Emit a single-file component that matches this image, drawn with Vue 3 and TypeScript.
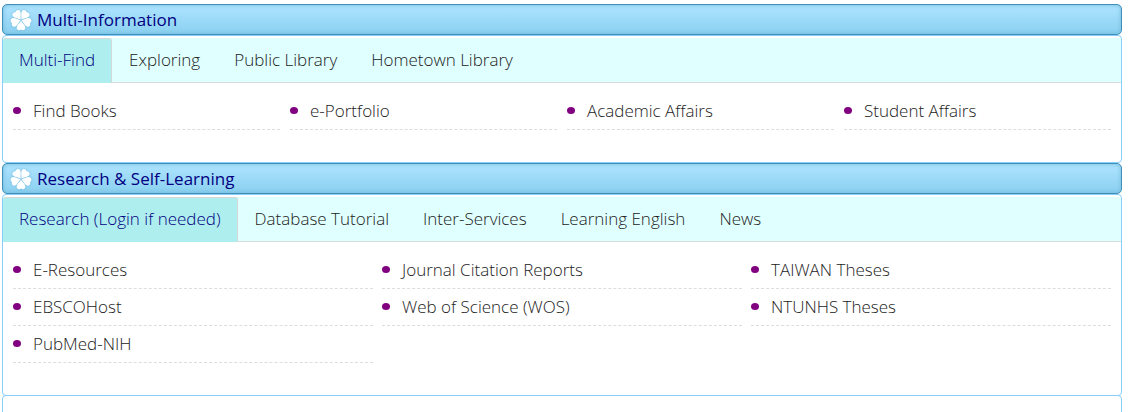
<script setup lang="ts">
import { ref } from 'vue'

interface Section {
  title: string
  columns: number
  tabs: string[]
  links: string[]
}

const sections: Section[] = [
  {
    title: 'Multi-Information',
    columns: 4,
    tabs: ['Multi-Find', 'Exploring', 'Public Library', 'Hometown Library'],
    links: ['Find Books', 'e-Portfolio', 'Academic Affairs', 'Student Affairs'],
  },
  {
    title: 'Research & Self-Learning',
    columns: 3,
    tabs: ['Research (Login if needed)', 'Database Tutorial', 'Inter-Services', 'Learning English', 'News'],
    links: [
      'E-Resources',
      'Journal Citation Reports',
      'TAIWAN Theses',
      'EBSCOHost',
      'Web of Science (WOS)',
      'NTUNHS Theses',
      'PubMed-NIH',
    ],
  },
]

const active = ref<number[]>(sections.map(() => 0))
const petals = [36, 108, 180, 252, 324]
</script>

<template>
  <main class="page">
    <section v-for="(section, s) in sections" :key="section.title">
      <h2 class="title">
        <svg class="flower" viewBox="0 0 24 24" aria-hidden="true">
          <path
            v-for="angle in petals"
            :key="angle"
            :transform="`rotate(${angle} 12 12)`"
            d="M12 11.3 C10.6 9 7.4 6.4 7.2 3.8 C7 .9 10.2 .2 12 1.6 C13.8 .2 17 .9 16.8 3.8 C16.6 6.4 13.4 9 12 11.3Z"
          />
        </svg>
        {{ section.title }}
      </h2>
      <div class="panel">
        <nav class="tabs" role="tablist">
          <button
            v-for="(tab, t) in section.tabs"
            :key="tab"
            type="button"
            role="tab"
            class="tab"
            :class="{ active: active[s] === t }"
            :aria-selected="active[s] === t"
            @click="active[s] = t"
          >
            {{ tab }}
          </button>
        </nav>
        <ul class="links" :class="`cols-${section.columns}`">
          <li v-for="link in section.links" :key="link">
            <a href="#">{{ link }}</a>
          </li>
        </ul>
      </div>
    </section>
    <section class="panel next"></section>
  </main>
</template>

<style>
body {
  margin: 0;
  background: #fff;
}
</style>

<style scoped>
.page {
  box-sizing: border-box;
  height: 100vh;
  overflow: hidden;
  padding: 4px 7px 0 2px;
  font-family: "Open Sans", "Noto Sans", sans-serif;
  font-size: 17px;
  color: #222;
}

.title {
  box-sizing: border-box;
  display: flex;
  align-items: center;
  gap: 5px;
  height: 31px;
  margin: 0;
  padding: 0 7px;
  border: 1px solid #3f8fb8;
  border-radius: 5px;
  background: linear-gradient(#aee4ff, #8ad0f0);
  box-shadow: inset 0 0 4px #6fb6d8;
  color: #000080;
  font-size: 17px;
  font-weight: 500;
  line-height: 29px;
}

.flower {
  width: 22px;
  height: 22px;
  fill: #fff;
  filter: drop-shadow(0 0 1px #6db6d8);
}

.panel {
  border: 1px solid #87cefa;
  border-radius: 4px;
  padding: 2px 0 32px;
}

.next {
  margin-top: -1px;
}

.tabs {
  display: flex;
  gap: 1px;
  border-bottom: 1px solid #d8dcdc;
  background: #e0ffff;
}

.tab {
  height: 44px;
  margin: 0;
  padding: 0 16px 2px;
  border: solid transparent;
  border-width: 1px 1px 0 0;
  background: transparent;
  color: inherit;
  font: inherit;
  font-weight: 300;
  line-height: 24px;
  cursor: pointer;
}

.tab.active {
  height: 45px;
  margin-bottom: -1px;
  padding-bottom: 3px;
  border-color: #d3d8d8;
  border-radius: 3px 3px 0 0;
  background: #afeeee;
  color: #000080;
}

.links {
  display: grid;
  margin: 0;
  padding: 10px 10px 0;
  list-style: none;
}

.cols-4 {
  grid-template-columns: repeat(4, 1fr);
  column-gap: 10px;
}

.cols-3 {
  grid-template-columns: repeat(3, 1fr);
  column-gap: 9px;
}

.links li {
  display: flex;
  align-items: center;
  gap: 12px;
  height: 36px;
  border-bottom: 1px dashed #ddd;
}

.links li::before {
  content: "";
  width: 8px;
  height: 7px;
  margin-bottom: 1px;
  border-radius: 50%;
  background: #800080;
}

.links a {
  color: inherit;
  font-weight: 300;
  line-height: 36px;
  text-decoration: none;
}
</style>
